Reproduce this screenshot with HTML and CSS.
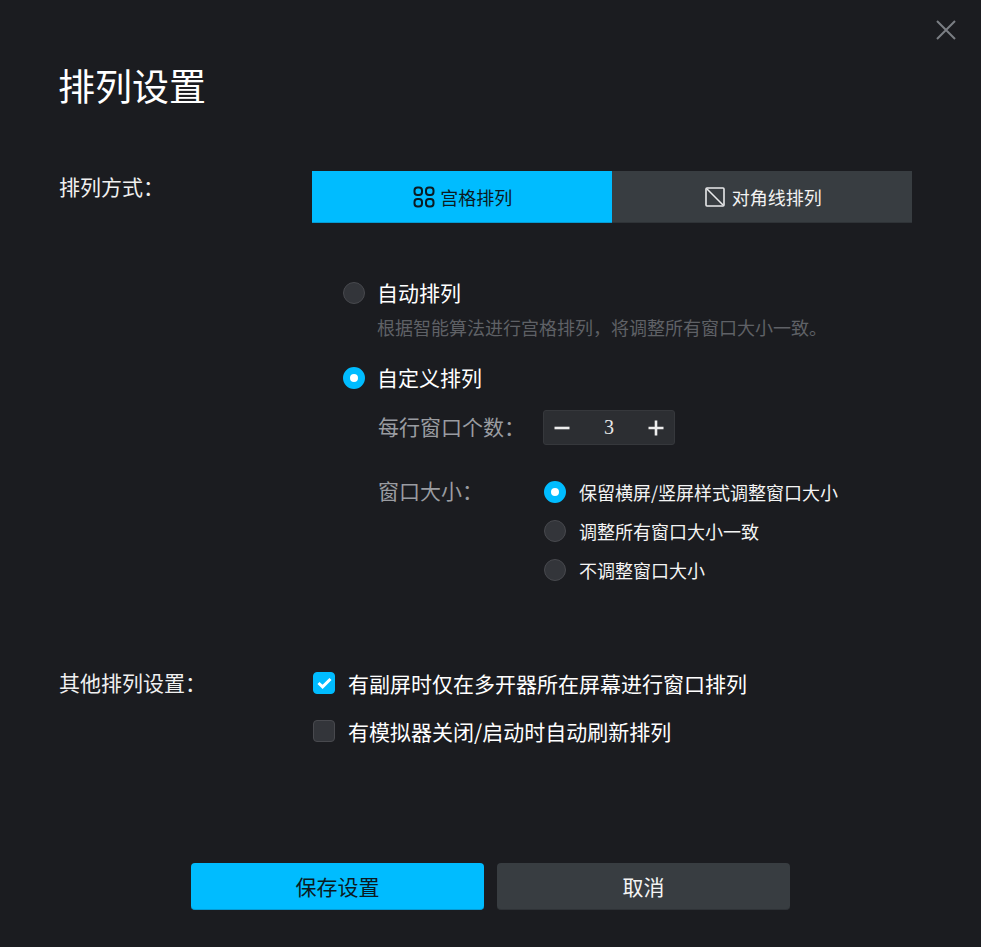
FILE: index.html
```html
<!DOCTYPE html>
<html lang="zh-CN">
<head>
  <meta charset="UTF-8">
  <title>排列设置</title>
  <link rel="stylesheet" href="styles.css">
</head>
<body>
  <div class="dialog">
    <button class="close" aria-label="关闭">
      <svg width="22" height="22" viewBox="0 0 22 22"><path d="M2 2 L20 20 M20 2 L2 20" stroke="#7b7e84" stroke-width="2" fill="none"/></svg>
    </button>

    <h1 class="title">排列设置</h1>

    <div class="row mode-row">
      <div class="row-label">排列方式&#xFF1A;</div>
      <div class="row-body">
        <div class="tabs">
          <div class="tab active">
            <svg width="22" height="22" viewBox="0 0 22 22" fill="none" stroke="#0b1a22" stroke-width="2">
              <rect x="1.5" y="1.5" width="7.5" height="7.5" rx="3"/>
              <rect x="13" y="1.5" width="7.5" height="7.5" rx="3"/>
              <rect x="1.5" y="13" width="7.5" height="7.5" rx="3"/>
              <rect x="13" y="13" width="7.5" height="7.5" rx="3"/>
            </svg>
            <span>宫格排列</span>
          </div>
          <div class="tab">
            <svg width="20" height="20" viewBox="0 0 20 20" fill="none" stroke="#e8e9ea" stroke-width="1.6">
              <rect x="1" y="1" width="18" height="18" rx="1"/>
              <path d="M2 2 L18 18"/>
            </svg>
            <span>对角线排列</span>
          </div>
        </div>

        <div class="options">
          <label class="radio-line">
            <i class="radio"></i>
            <span class="radio-text">自动排列</span>
          </label>
          <p class="hint">根据智能算法进行宫格排列&#xFF0C;将调整所有窗口大小一致。</p>

          <label class="radio-line custom-line">
            <i class="radio on"></i>
            <span class="radio-text">自定义排列</span>
          </label>

          <div class="sub-row count-row">
            <div class="sub-label">每行窗口个数&#xFF1A;</div>
            <div class="stepper">
              <svg width="16" height="16" viewBox="0 0 16 16"><path d="M0.5 8 H15.5" stroke="#eeeeee" stroke-width="2.6"/></svg>
              <span class="step-value">3</span>
              <svg width="16" height="16" viewBox="0 0 16 16"><path d="M0.5 8 H15.5 M8 0.5 V15.5" stroke="#eeeeee" stroke-width="2.6"/></svg>
            </div>
          </div>

          <div class="sub-row size-row">
            <div class="sub-label">窗口大小&#xFF1A;</div>
            <div class="size-list">
              <label class="size-item"><i class="radio on"></i><span>保留横屏/竖屏样式调整窗口大小</span></label>
              <label class="size-item"><i class="radio"></i><span>调整所有窗口大小一致</span></label>
              <label class="size-item"><i class="radio"></i><span>不调整窗口大小</span></label>
            </div>
          </div>
        </div>
      </div>
    </div>

    <div class="row other-row">
      <div class="row-label">其他排列设置&#xFF1A;</div>
      <div class="row-body">
        <label class="check-line">
          <i class="check on">
            <svg width="15" height="12" viewBox="0 0 15 12"><path d="M1.5 6 L5.6 9.8 L13.5 2" stroke="#fff" stroke-width="3" fill="none"/></svg>
          </i>
          <span>有副屏时仅在多开器所在屏幕进行窗口排列</span>
        </label>
        <label class="check-line">
          <i class="check"></i>
          <span>有模拟器关闭/启动时自动刷新排列</span>
        </label>
      </div>
    </div>

    <div class="actions">
      <button class="btn primary">保存设置</button>
      <button class="btn">取消</button>
    </div>
  </div>
</body>
</html>
```

FILE: styles.css
```css
* {
  box-sizing: border-box;
}

html,
body {
  margin: 0;
  height: 100%;
}

body {
  background-color: #1b1c20;
  color: #ffffff;
  font-family: "Noto Sans CJK SC", "Noto Sans", sans-serif;
}

.dialog {
  position: relative;
  width: 981px;
  height: 947px;
  padding: 60px 69px 0 59px;
}

.close {
  position: absolute;
  top: 19px;
  right: 24px;
  width: 22px;
  height: 22px;
  padding: 0;
  border: none;
  background: none;
}

.title {
  margin: 0 0 0 -1px;
  height: 54px;
  font-size: 37px;
  line-height: 50px;
  font-weight: 400;
}

.row {
  display: flex;
}

.row-label {
  width: 253px;
  flex: none;
  font-size: 21px;
  line-height: 30px;
  color: #f0f0f0;
}

.row-body {
  flex: 1;
}

.mode-row {
  margin-top: 57px;
}

.tabs {
  display: flex;
  height: 52px;
}

.tab {
  flex: 1;
  display: flex;
  align-items: center;
  justify-content: center;
  gap: 7px;
  padding-left: 3px;
  background-color: #383d41;
  border-bottom: 1px solid #2f3337;
  font-size: 18px;
  color: #f2f2f2;
}

.tab.active {
  gap: 5px;
  padding-left: 2px;
  background-color: #00bcff;
  border-bottom-color: #069bd3;
  color: #0b1a22;
}

.options {
  padding: 54px 0 0 31px;
}

.radio-line {
  display: flex;
  align-items: center;
  gap: 12px;
  height: 32px;
}

.radio {
  display: block;
  flex: none;
  width: 22px;
  height: 22px;
  border-radius: 50%;
  background-color: #33353a;
  border: 1px solid #48494e;
}

.radio.on {
  background-color: #ffffff;
  border: 7px solid #00bcff;
}

.radio-text {
  padding-bottom: 2px;
  font-size: 21px;
  line-height: 30px;
}

.hint {
  margin: 5px 0 0 34px;
  font-size: 18px;
  line-height: 26px;
  color: #5f6166;
}

.custom-line {
  margin-top: 22px;
}

.sub-row {
  display: flex;
  margin-left: 35px;
}

.sub-label {
  width: 165px;
  flex: none;
  font-size: 21px;
  line-height: 32px;
  color: #9a9ca1;
}

.count-row {
  margin-top: 16px;
}

.stepper {
  display: flex;
  align-items: center;
  justify-content: space-between;
  width: 132px;
  height: 35px;
  padding: 0 10px;
  background-color: #2c2e32;
  border: 1px solid #36383c;
  border-radius: 3px;
}

.step-value {
  font-family: "Liberation Serif", serif;
  font-size: 20px;
  color: #e8e8e8;
}

.size-row {
  margin-top: 29px;
}

.size-list {
  display: flex;
  flex-direction: column;
  gap: 9px;
  margin: 3px 0 0 1px;
}

.size-item {
  display: flex;
  align-items: center;
  gap: 13px;
  height: 30px;
  font-size: 18px;
  color: #f4f4f4;
}

.other-row {
  margin-top: 82px;
}

.check-line {
  display: flex;
  align-items: center;
  gap: 13px;
  height: 32px;
  margin-bottom: 16px;
  font-size: 21px;
}

.check {
  display: flex;
  align-items: center;
  justify-content: center;
  flex: none;
  width: 22px;
  height: 22px;
  margin-left: 1px;
  border-radius: 4px;
  background-color: #33353a;
  border: 1px solid #48494e;
}

.check.on {
  background-color: #00bcff;
  border-color: #00bcff;
}

.actions {
  position: absolute;
  left: 191px;
  bottom: 37px;
  display: flex;
  gap: 13px;
}

.btn {
  width: 293px;
  height: 47px;
  border: none;
  border-bottom: 1px solid #2f3337;
  border-radius: 4px;
  background-color: #383d41;
  color: #f4f4f4;
  font-family: inherit;
  font-size: 21px;
}

.btn.primary {
  background-color: #00bcff;
  border-bottom-color: #069bd3;
  color: #0b1a22;
}
```
